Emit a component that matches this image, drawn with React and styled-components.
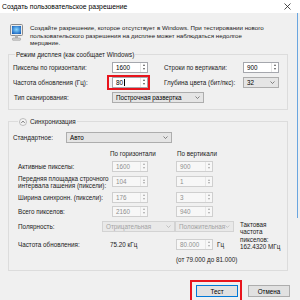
import React from 'react'
import styled, { createGlobalStyle } from 'styled-components'

const GlobalStyle = createGlobalStyle`
  html, body { margin: 0; padding: 0; background: #f0f0f0; }
  body {
    font-family: "Liberation Sans", Arial, sans-serif;
    font-size: 6.3px;
    color: #1a1a1a;
  }
  * { box-sizing: border-box; }
`

const Window = styled.div`
  position: relative;
  width: 300px;
  height: 300px;
  overflow: hidden;
  background: #f0f0f0;
  &::after {
    content: '';
    position: absolute;
    right: 2px;
    top: 13px;
    height: 205px;
    width: 1px;
    background: #6aa6e0;
  }
`

const TitleBar = styled.div`
  height: 13px;
  background: #fff;
  display: flex;
  align-items: center;
  justify-content: space-between;
  padding: 0 9px 0 2px;
  font-size: 6.8px;
  color: #000;
`

const Intro = styled.div`
  display: flex;
  gap: 7px;
  padding: 11px 0 0 10px;
`

const IntroText = styled.div`
  line-height: 7.5px;
  font-size: 6.2px;
  color: #1a1a1a;
`

const Group = styled.fieldset`
  margin: ${p => p.$mt}px 0 0 8px;
  width: 280px;
  min-width: 0;
  border: 1px solid #dcdcdc;
  padding: ${p => p.$pad};
`

const Legend = styled.legend`
  margin-left: ${p => p.$ml}px;
  padding: 0 1px;
  line-height: 8px;
  display: flex;
  align-items: center;
  gap: 3px;
`

const Row = styled.div`
  display: flex;
  align-items: center;
  height: ${p => p.$h || 11}px;
  margin-top: ${p => p.$mt || 0}px;
`

const Label = styled.div`
  width: ${p => p.$w}px;
  margin-left: ${p => p.$ml || 0}px;
  line-height: 7px;
  flex-shrink: 0;
`

const SpinBox = styled.div`
  position: relative;
  display: flex;
  width: ${p => p.$w}px;
  height: 11px;
  flex-shrink: 0;
  border: 1px solid ${p => (p.$off ? '#cfcfcf' : '#a5a7ad')};
  background: ${p => (p.$off ? '#f7f7f7' : '#fff')};
`

const SpinValue = styled.div`
  flex: 1;
  padding-left: 3px;
  line-height: 9px;
  color: ${p => (p.$off ? '#8f8f8f' : '#000')};
`

const Caret = styled.span`
  display: inline-block;
  width: 1px;
  height: 7px;
  margin-left: 0.5px;
  vertical-align: -1px;
  background: #000;
`

const SpinArrows = styled.div`
  width: 7px;
  display: flex;
  flex-direction: column;
  align-items: center;
  justify-content: center;
  gap: 1.5px;
  border-left: 1px solid #e6e6e6;
`

const Tri = styled.span`
  width: 0;
  height: 0;
  border-left: 1.5px solid transparent;
  border-right: 1.5px solid transparent;
  ${p => (p.$down ? 'border-top' : 'border-bottom')}: 2px solid ${p => (p.$off ? '#a8a8a8' : '#555')};
`

const Highlight = styled.div`
  position: absolute;
  top: ${p => p.$t}px;
  right: ${p => p.$r}px;
  bottom: ${p => p.$b}px;
  left: ${p => p.$l}px;
  border: 2px solid #e8141c;
  pointer-events: none;
`

const SelectBox = styled.div`
  display: flex;
  align-items: center;
  justify-content: space-between;
  width: ${p => p.$w}px;
  height: 11px;
  flex-shrink: 0;
  padding: 0 3px 0 3px;
  border: 1px solid ${p => (p.$off ? '#d3d3d3' : '#adadad')};
  background: ${p => (p.$off ? '#e9e9e9' : '#e5e5e5')};
  color: ${p => (p.$off ? '#a3a3a3' : '#000')};
  white-space: nowrap;
  overflow: hidden;
`

const Heads = styled.div`
  display: flex;
  height: 8px;
  margin-top: 7px;
  padding-left: 97px;
  line-height: 8px;
`

const Head = styled.div`
  width: ${p => p.$w}px;
`

const Value = styled.div`
  width: ${p => p.$w}px;
  flex-shrink: 0;
`

const Unit = styled.div`
  margin-left: 4px;
`

const Bottom = styled.div`
  display: flex;
  margin-top: 4px;
`

const LeftCol = styled.div`
  width: 227px;
`

const Clock = styled.div`
  line-height: 7.3px;
  padding-top: 0.5px;
`

const Range = styled.div`
  margin: 6px 0 0 163px;
  line-height: 7px;
`

const Buttons = styled.div`
  display: flex;
  justify-content: flex-end;
  gap: 10px;
  padding-right: 10px;
  margin-top: 14px;
`

const Button = styled.div`
  position: relative;
  width: 42px;
  height: 12px;
  display: flex;
  align-items: center;
  justify-content: center;
  background: #e1e1e1;
  border: 1px solid ${p => (p.$focus ? '#0078d7' : '#adadad')};
  color: #000;
`

const Spin = ({ w, value, off, caret, mark }) => (
  <SpinBox $w={w} $off={off}>
    <SpinValue $off={off}>
      {value}
      {caret && <Caret />}
    </SpinValue>
    <SpinArrows>
      <Tri $off={off} />
      <Tri $down $off={off} />
    </SpinArrows>
    {mark && <Highlight $t={-3} $r={-3} $b={-3} $l={-6} />}
  </SpinBox>
)

const Chevron = ({ off }) => (
  <svg width="5" height="3" viewBox="0 0 5 3">
    <polyline points="0.5,0.5 2.5,2.5 4.5,0.5" fill="none" stroke={off ? '#b0b0b0' : '#555'} strokeWidth="0.7" />
  </svg>
)

const Select = ({ w, value, off }) => (
  <SelectBox $w={w} $off={off}>
    <span>{value}</span>
    <Chevron off={off} />
  </SelectBox>
)

const MonitorIcon = () => (
  <svg width="13" height="17" viewBox="0 0 13 17">
    <defs>
      <radialGradient id="scr" cx="50%" cy="45%" r="65%">
        <stop offset="0" stopColor="#8ad8ff" />
        <stop offset="1" stopColor="#1560bd" />
      </radialGradient>
    </defs>
    <rect x="0.5" y="0.5" width="12" height="11" rx="1" fill="#ececec" stroke="#8c8c8c" />
    <rect x="2" y="2" width="9" height="8" fill="url(#scr)" />
    <rect x="5" y="11.5" width="3" height="2.5" fill="#b5b5b5" />
    <rect x="2.5" y="14" width="8" height="2.3" rx="0.6" fill="#d0d0d0" stroke="#8c8c8c" strokeWidth="0.5" />
  </svg>
)

const CollapseIcon = () => (
  <svg width="8" height="8" viewBox="0 0 8 8">
    <circle cx="4" cy="4" r="3.5" fill="#f4f4f4" stroke="#9a9a9a" strokeWidth="0.6" />
    <polyline points="2.4,4.8 4,3.2 5.6,4.8" fill="none" stroke="#444" strokeWidth="0.8" />
  </svg>
)

const CloseIcon = () => (
  <svg width="7" height="7" viewBox="0 0 7 7">
    <path d="M0.5 0.5 L6.5 6.5 M6.5 0.5 L0.5 6.5" stroke="#222" strokeWidth="0.8" />
  </svg>
)

const App = () => {
  return (
    <Window>
      <GlobalStyle />
      <TitleBar>
        <span>Создать пользовательское разрешение</span>
        <CloseIcon />
      </TitleBar>

      <Intro>
        <MonitorIcon />
        <IntroText>
          Создайте разрешение, которое отсутствует в Windows. При тестировании нового
          <br />
          пользовательского разрешения на дисплее может наблюдаться недолгое
          <br />
          мерцание.
        </IntroText>
      </Intro>

      <Group $mt={4} $pad="3px 0 6px 4px">
        <Legend $ml={2}>Режим дисплея (как сообщает Windows)</Legend>
        <Row>
          <Label $w={99}>Пикселы по горизонтали:</Label>
          <Spin w={36} value="1600" />
          <Label $w={79} $ml={16}>Строки по вертикали:</Label>
          <Spin w={36} value="900" />
        </Row>
        <Row $mt={4}>
          <Label $w={99}>Частота обновления (Гц):</Label>
          <Spin w={36} value="80" caret mark />
          <Label $w={79} $ml={16}>Глубина цвета (бит/пкс):</Label>
          <Select w={36} value="32" />
        </Row>
        <Row $mt={4}>
          <Label $w={98} $ml={1}>Тип сканирования:</Label>
          <Select w={92} value="Построчная развертка" />
        </Row>
      </Group>

      <Group $mt={8} $pad="6px 0 7px 4px">
        <Legend $ml={5}>
          <CollapseIcon />
          Синхронизация
        </Legend>
        <Row>
          <Label $w={53}>Стандартное:</Label>
          <Select w={106} value="Авто" />
        </Row>
        <Heads>
          <Head $w={67}>По горизонтали</Head>
          <Head $w={60}>По вертикали</Head>
        </Heads>
        <Row $mt={3}>
          <Label $w={94} $ml={5}>Активные пикселы:</Label>
          <Spin w={36} value="1600" off />
          <Value $w={28} />
          <Spin w={37} value="900" off />
        </Row>
        <Row $mt={3} $h={14}>
          <Label $w={94} $ml={5}>
            Передняя площадка строчного
            <br />
            интервала гашения (пиксели):
          </Label>
          <Spin w={36} value="104" off />
          <Value $w={28} />
          <Spin w={37} value="1" off />
        </Row>
        <Row $mt={3}>
          <Label $w={94} $ml={5}>Ширина синхронн. (пиксели):</Label>
          <Spin w={36} value="176" off />
          <Value $w={28} />
          <Spin w={37} value="3" off />
        </Row>
        <Row $mt={3}>
          <Label $w={94} $ml={5}>Всего пикселов:</Label>
          <Spin w={36} value="2160" off />
          <Value $w={28} />
          <Spin w={37} value="940" off />
        </Row>
        <Bottom>
          <LeftCol>
            <Row>
              <Label $w={84} $ml={5}>Полярность:</Label>
              <Select w={73} value="Отрицательная" off />
              <Select w={59} value="Положительная" off />
            </Row>
            <Row $mt={7}>
              <Label $w={92} $ml={5}>Частота обновления:</Label>
              <Value $w={66}>75.20 кГц</Value>
              <Spin w={37} value="80.000" off />
              <Unit>Гц</Unit>
            </Row>
          </LeftCol>
          <Clock>
            Тактовая
            <br />
            частота
            <br />
            пикселов:
            <br />
            162.4320 МГц
          </Clock>
        </Bottom>
        <Range>(от 79.000 до 81.000)</Range>
      </Group>

      <Buttons>
        <Button $focus>
          Тест
          <Highlight $t={-6} $r={-5} $b={-6} $l={-7} />
        </Button>
        <Button>Отмена</Button>
      </Buttons>
    </Window>
  )
}

export default App
